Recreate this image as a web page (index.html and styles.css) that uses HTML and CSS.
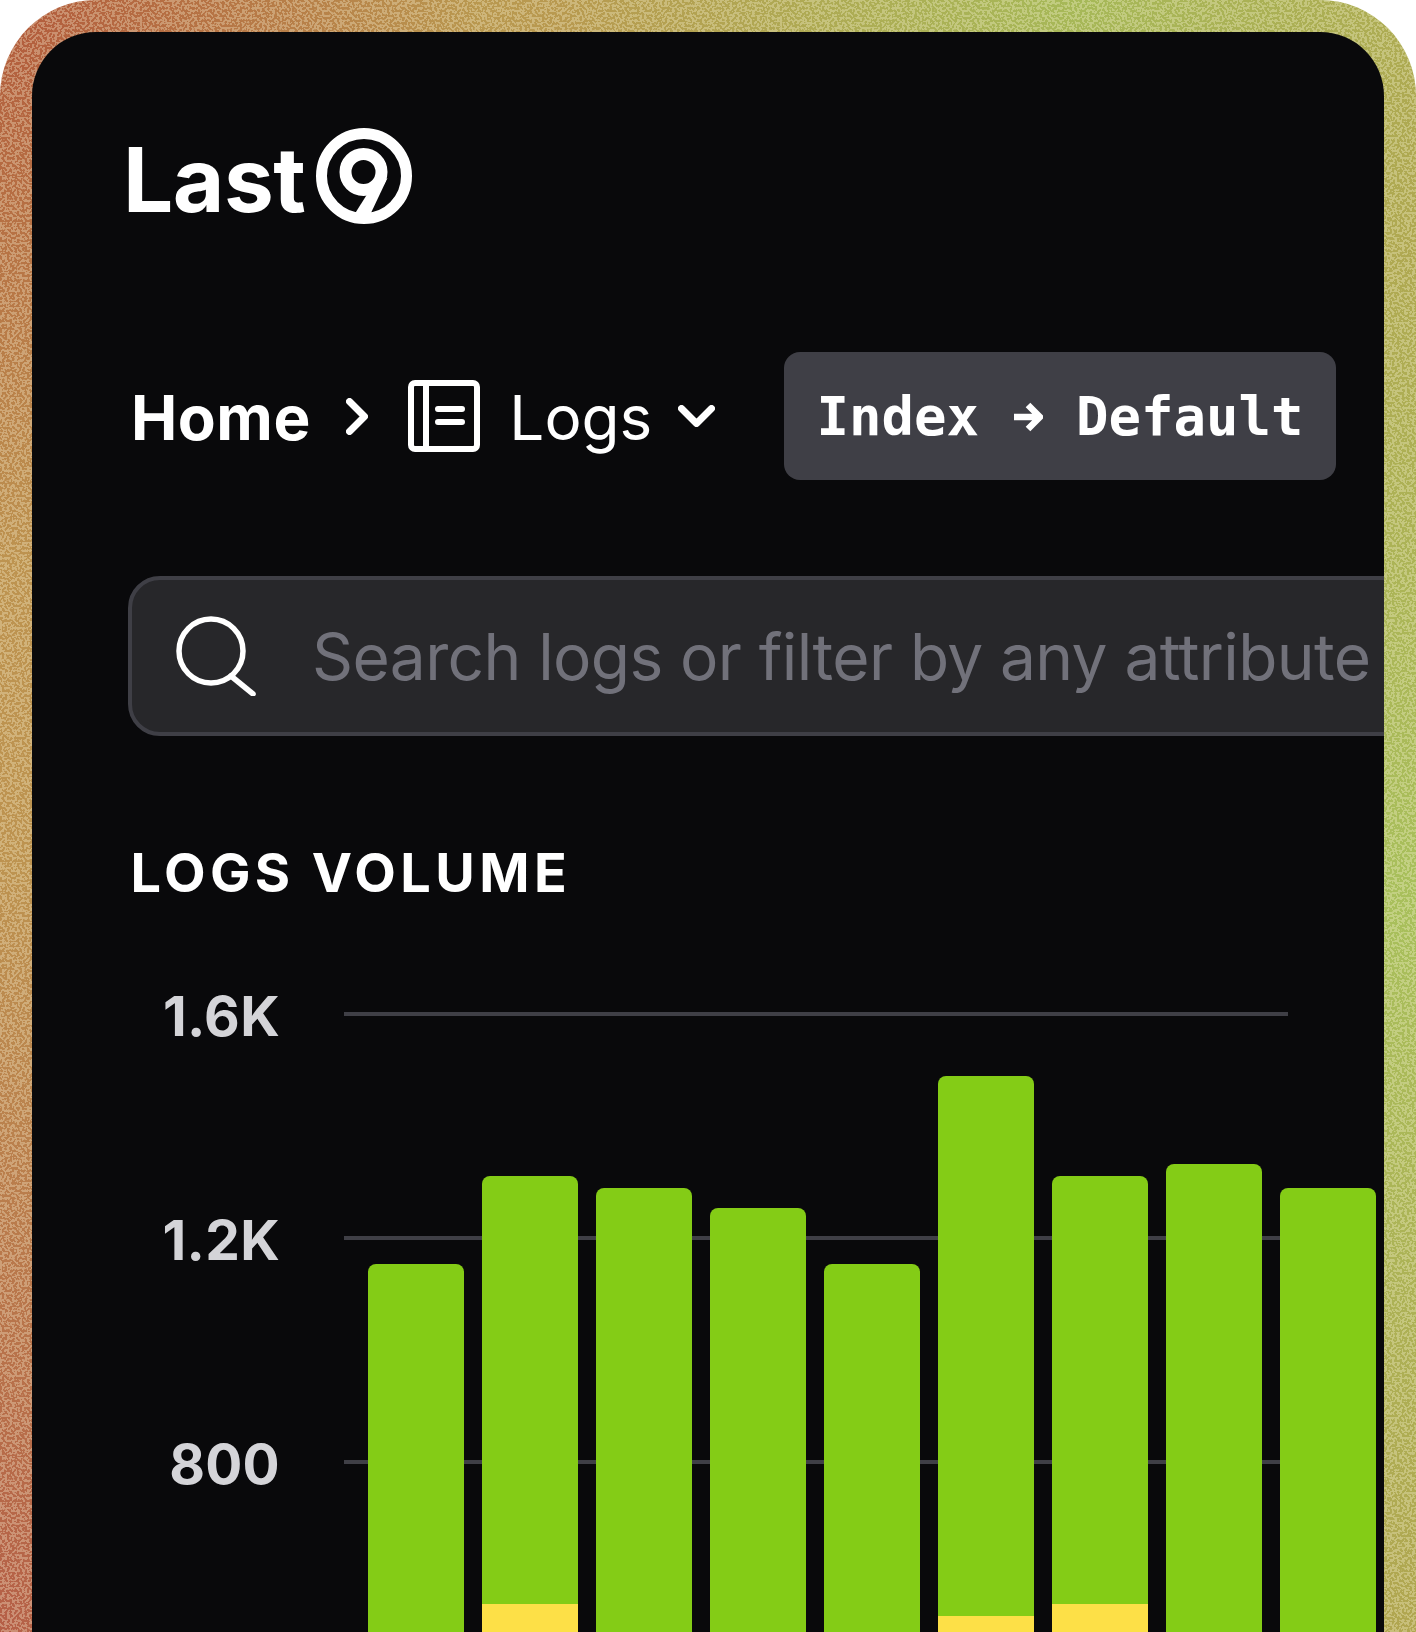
FILE: index.html
```html
<!DOCTYPE html>
<html lang="en">
<head>
<meta charset="utf-8">
<title>Last9 Logs</title>
<link rel="stylesheet" href="styles.css">
</head>
<body>
<div class="frame">
  <svg class="grain" aria-hidden="true">
    <filter id="grain-filter" x="0" y="0" width="100%" height="100%">
      <feTurbulence type="fractalNoise" baseFrequency="0.4" numOctaves="1" seed="7"/>
      <feColorMatrix type="matrix" values="0 0 0 0 1  0 0 0 0 0.96  0 0 0 0 0.72  40 0 0 0 -19.6"/>
    </filter>
    <rect width="100%" height="100%" filter="url(#grain-filter)"/>
  </svg>
  <main class="card">
    <header class="logo">
      <span class="logo-text">Last</span>
      <svg class="logo-mark" viewBox="0 0 96 96">
        <circle cx="48" cy="48" r="42.5" fill="none" stroke="#fff" stroke-width="11"/>
        <circle cx="47.500" cy="44" r="18" fill="none" stroke="#fff" stroke-width="12"/>
        <path d="M71.500 50 54 87H38L57 57Z" fill="#fff"/>
      </svg>
    </header>

    <nav class="crumbs">
      <span class="crumb-home">Home</span>
      <svg class="chev-right" viewBox="0 0 22 37"><path d="M3.500 3.500l15 15L3.500 33.500"/></svg>
      <svg class="logs-icon" viewBox="0 0 72 72">
        <rect x="3" y="3" width="66" height="66" rx="4"/>
        <path d="M18 3v66M30 29h24M30 42h24"/>
      </svg>
      <span class="crumb-logs">Logs</span>
      <svg class="chev-down" viewBox="0 0 37 22"><path d="M3.500 3.500l15 15 15-15"/></svg>
      <span class="index-pill">Index <svg class="arrow" viewBox="0 0 32 32"><path d="M3 16h25M17 4l12 12-12 12"/></svg> Default</span>
    </nav>

    <div class="search">
      <svg class="search-icon" viewBox="0 0 80 80">
        <circle cx="35" cy="35" r="32"/>
        <path d="M55 60l22 18"/>
      </svg>
      <span class="placeholder">Search logs or filter by any attribute</span>
    </div>

    <h2 class="section-title">LOGS VOLUME</h2>

    <section class="chart">
      <div class="axis">
        <span class="tick">1.6K</span>
        <span class="tick">1.2K</span>
        <span class="tick">800</span>
      </div>
      <div class="plot">
        <div class="gridlines"><i></i><i></i><i></i></div>
        <div class="bars">
          <div class="bar" style="height:368px"></div>
          <div class="bar" style="height:456px"><div class="warn" style="height:28px"></div></div>
          <div class="bar" style="height:444px"></div>
          <div class="bar" style="height:424px"></div>
          <div class="bar" style="height:368px"></div>
          <div class="bar" style="height:556px"><div class="warn" style="height:16px"></div></div>
          <div class="bar" style="height:456px"><div class="warn" style="height:28px"></div></div>
          <div class="bar" style="height:468px"></div>
          <div class="bar" style="height:444px"></div>
        </div>
      </div>
    </section>
  </main>
</div>
</body>
</html>
```
FILE: styles.css
```css
* { box-sizing: border-box; }
html, body { margin: 0; background: #fff; }
body { font-family: Inter, "Noto Sans", sans-serif; }

.frame {
  position: relative;
  width: 1416px;
  height: 1632px;
  padding: 32px 32px 0;
  overflow: hidden;
  border-radius: 96px 96px 0 0;
  background:
    radial-gradient(420px 760px at 0 1632px, #b55f47 0%, rgba(181,95,71,0) 100%),
    radial-gradient(480px 560px at 0 0, #b25a3c 0%, rgba(178,90,60,0) 100%),
    radial-gradient(620px 800px at 1416px 900px, #a8c05c 0%, rgba(168,192,92,0) 100%),
    radial-gradient(520px 320px at 1080px 0, #a6b958 0%, rgba(166,185,88,0) 100%),
    linear-gradient(90deg, #bd9350 0%, #b1a34f 100%);
}
.grain { position: absolute; inset: 0; width: 100%; height: 100%; opacity: .3; }

.card {
  position: relative;
  height: 1700px;
  padding: 96px 0 0 96px;
  overflow: hidden;
  border-radius: 64px 64px 0 0;
  background: #09090b;
  color: #fff;
}

.logo { display: flex; align-items: center; height: 96px; gap: 11px; margin-left: -5px; }
.logo-text {
  font: 700 89px/96px Inter, sans-serif;
  letter-spacing: -.5px;
  position: relative; top: 4px;
}
.logo-mark { width: 96px; height: 96px; flex: none; }

.crumbs { display: flex; align-items: center; width: 1208px; height: 128px; margin-top: 128px; }
.crumb-home { font-size: 62px; font-weight: 700; line-height: 1; letter-spacing: .5px; margin-left: 3px; padding-top: 4px; }
.chev-right { width: 22px; height: 37px; margin-left: 35.500px; flex: none; }
.chev-right, .chev-down { fill: none; stroke: #fff; stroke-width: 7; stroke-linecap: round; stroke-linejoin: round; }
.logs-icon { width: 72px; height: 72px; margin-left: 40px; flex: none; fill: none; stroke: #fff; stroke-width: 6; stroke-linecap: round; stroke-linejoin: round; }
.crumb-logs { font-size: 62px; font-weight: 400; margin-left: 29px; line-height: 1; padding-top: 4px; }
.chev-down { width: 37px; height: 22px; margin-left: 26px; flex: none; }

.index-pill {
  display: flex; align-items: center; justify-content: center;
  margin-left: auto; width: 552px; height: 128px; padding-top: 2px;
  border-radius: 16px;
  background: #3f3f46;
  font: 700 54px/1 "DejaVu Sans Mono", monospace;
  white-space: pre;
}
.arrow { width: 32px; height: 32px; flex: none; fill: none; stroke: #fff; stroke-width: 6.500; stroke-linejoin: miter; }

.search {
  display: flex; align-items: center;
  margin-top: 96px; height: 160px; width: 1400px;
  padding-left: 44px;
  border: 4px solid #3f3f46;
  border-radius: 32px;
  background: #27272a;
}
.search-icon { width: 80px; height: 80px; flex: none; fill: none; stroke: #fff; stroke-width: 5.500; stroke-linecap: round; }
.placeholder { margin-left: 56px; padding-top: 2px; font-size: 64px; letter-spacing: -.6px; color: #71717a; white-space: nowrap; line-height: 1; }

.section-title {
  margin: 110px 0 0 2.500px;
  font-size: 54px; font-weight: 700; line-height: 54px; letter-spacing: 4.400px;
}

.chart { display: flex; margin-top: 112px; height: 620px; }
.axis { display: flex; flex-direction: column; width: 152px; flex: none; text-align: right; margin-top: -20px; }
.tick { flex: none; height: 224px; font-size: 55px; font-weight: 700; line-height: 48px; letter-spacing: .3px; color: #d4d4d8; }
.plot { position: relative; margin-left: 64px; flex: 1; }
.gridlines { position: absolute; left: 0; top: 0; width: 944px; display: flex; flex-direction: column; gap: 220px; }
.gridlines i { display: block; height: 4px; background: #3f3f46; }
.bars { position: absolute; left: 24px; bottom: 0; display: flex; align-items: flex-end; gap: 18px; height: 100%; }
.bar { display: flex; flex-direction: column; justify-content: flex-end; width: 96px; overflow: hidden; border-radius: 8px 8px 0 0; background: #84cc16; flex: none; }
.warn { background: #fde047; }
```
